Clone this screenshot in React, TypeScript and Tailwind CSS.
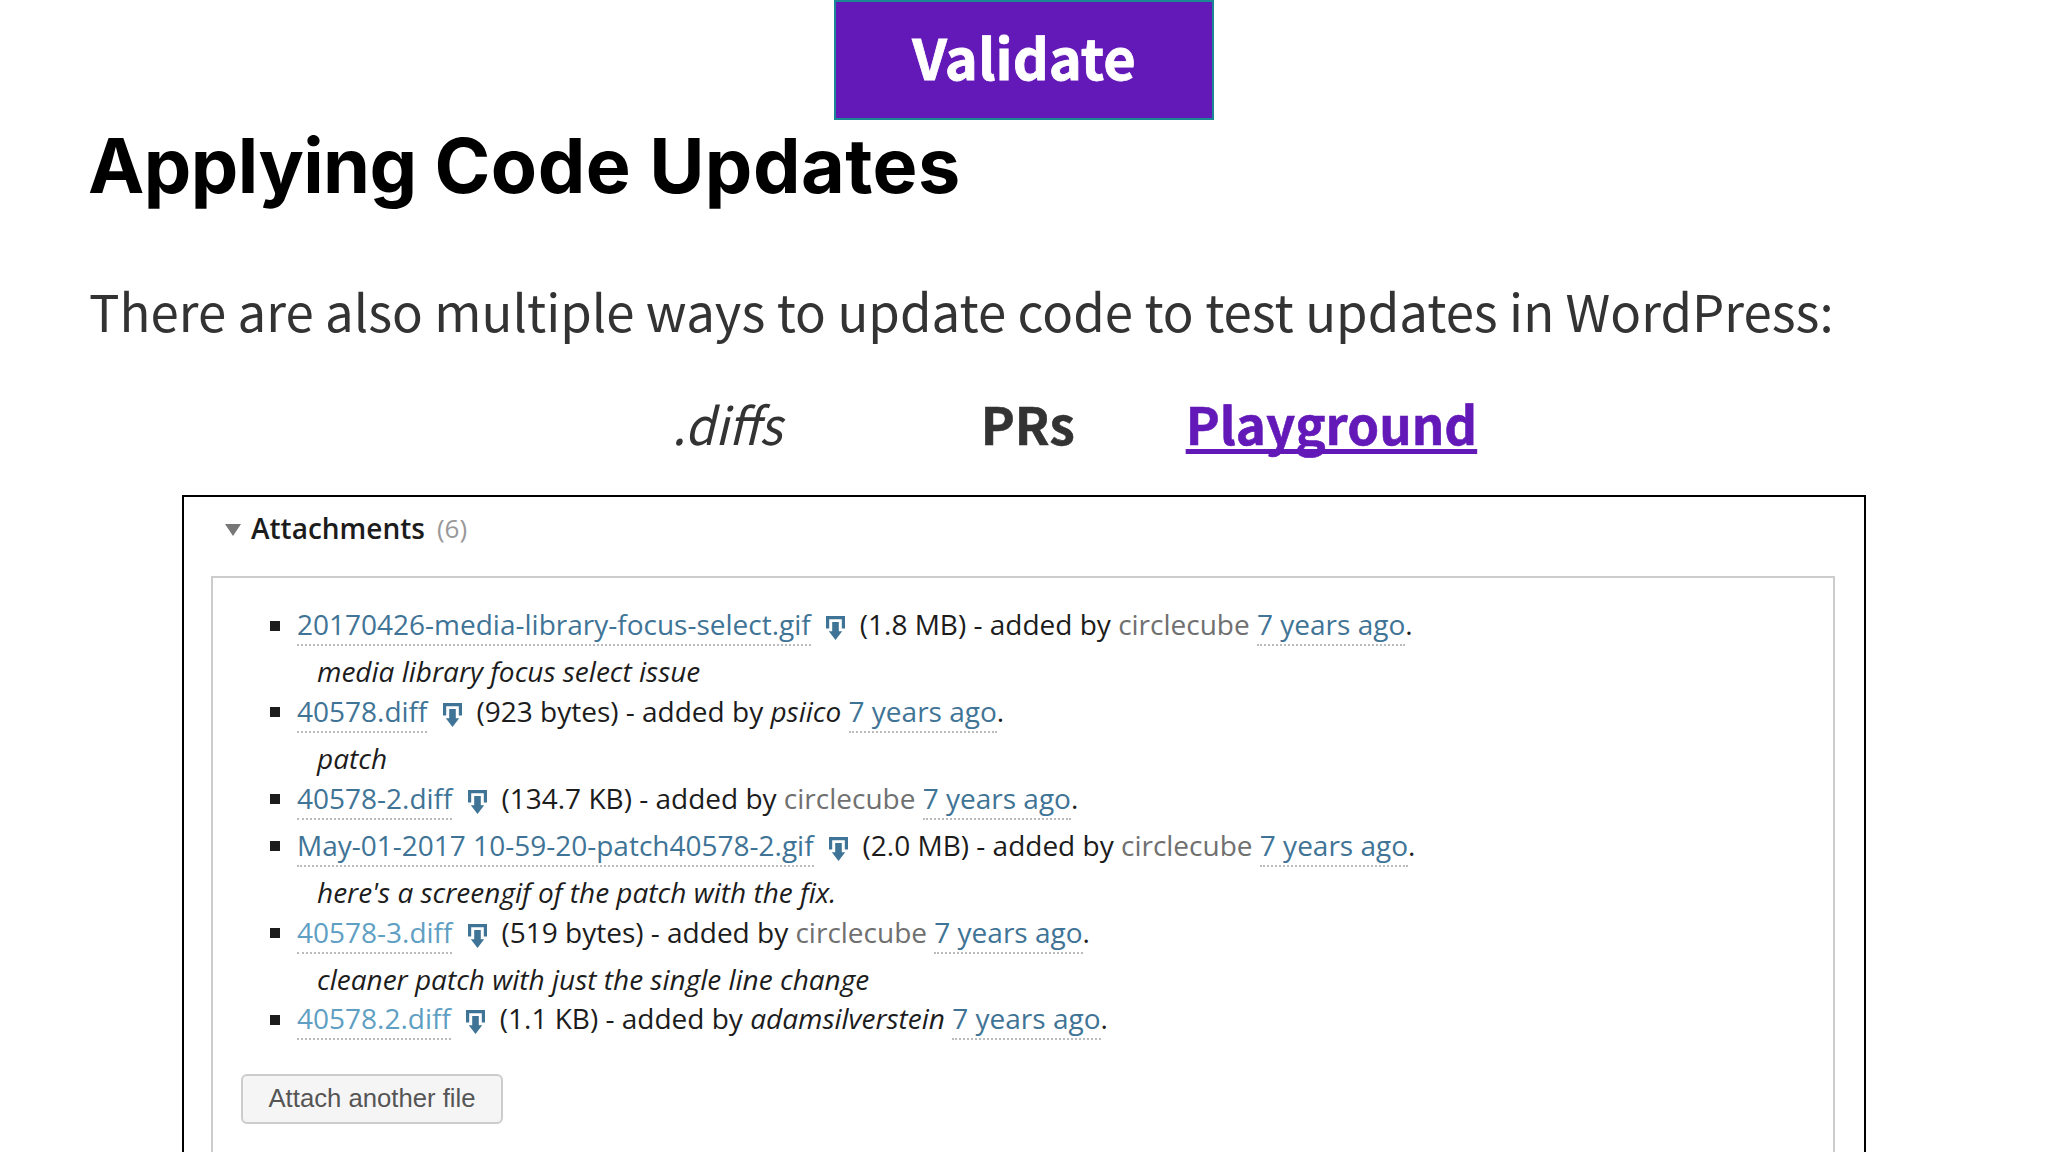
import React from 'react';
import clsx from 'clsx';

interface Attachment {
    id: number;
    name: string;
    size: string;
    author: string;
    registered: boolean;
    description?: string;
    recent?: boolean;
}

const ATTACHMENTS: Attachment[] = [
    { id: 1, name: '20170426-media-library-focus-select.gif', size: '1.8 MB', author: 'circlecube', registered: true, description: 'media library focus select issue' },
    { id: 2, name: '40578.diff', size: '923 bytes', author: 'psiico', registered: false, description: 'patch' },
    { id: 3, name: '40578-2.diff', size: '134.7 KB', author: 'circlecube', registered: true },
    { id: 4, name: 'May-01-2017 10-59-20-patch40578-2.gif', size: '2.0 MB', author: 'circlecube', registered: true, description: "here's a screengif of the patch with the fix." },
    { id: 5, name: '40578-3.diff', size: '519 bytes', author: 'circlecube', registered: true, description: 'cleaner patch with just the single line change', recent: true },
    { id: 6, name: '40578.2.diff', size: '1.1 KB', author: 'adamsilverstein', registered: false, recent: true }
];

function DownloadIcon() {
    return (
        <svg viewBox="0 0 19 24" className="inline-block w-[19px] h-6 ml-[15.5px] mr-[14.5px] align-[-5px]" fill="#3f7496">
            <path d="M0 0H19V12.5H15.8V3.2H3.2V12.5H0Z" />
            <path d="M6.2 6H12.8V15.3H16.2L9.5 24L2.8 15.3H6.2Z" />
        </svg>
    );
}

function AttachmentRow({ item }: { item: Attachment }) {
    return (
        <li>
            <div className="flex items-center h-[47.2px]">
                <span className="w-2.5 h-2.5 mr-[17px] mt-0.5 bg-[#1c1c1c]" />
                <span className="leading-[47.2px] whitespace-nowrap">
                    <a className={clsx('pb-px border-b-2 border-dotted border-[#bbb]', item.recent ? 'text-[#5f9fc3]' : 'text-[#3f7496]')}>{item.name}</a>
                    <DownloadIcon />
                    ({item.size}) - added by{' '}
                    <span className={item.registered ? 'text-[#707070]' : 'italic'}>{item.author}</span>{' '}
                    <a className="pb-px border-b-2 border-dotted border-[#bbb] text-[#3f7496]">7 years ago</a>.
                </span>
            </div>
            {item.description && (
                <p className="ml-[47px] -mb-2 leading-[47.6px] italic">{item.description}</p>
            )}
        </li>
    );
}

export default function App() {
    return (
        <div className="w-[2048px] h-[1152px] overflow-hidden bg-white text-[#333] font-['Noto_Sans_CJK_JP',sans-serif]">
            <div className="flex items-center justify-center w-[380px] h-[120px] mx-auto pb-[9px] bg-[#6318b8] border-2 border-[#1b8792] text-[56px] font-bold text-white [-webkit-text-stroke:0.8px_white]">
                Validate
            </div>

            <h1 className="pl-[88px] pt-px text-[75.5px] leading-[90px] font-bold text-black font-['Inter',sans-serif]">
                <span className="tracking-[-0.6px]">Applying</span>{' '}
                <span className="tracking-[0.5px]">Code</span>{' '}
                <span className="tracking-[0.45px]">Updates</span>
            </h1>
            <p className="pl-[89px] mt-[62px] text-[50.96px] leading-[74px] whitespace-nowrap">
                There are also multiple ways to update code to test updates in WordPress:
            </p>

            <div className="flex pl-[672px] mt-[39px] text-[51px] leading-[74px]">
                <span className="italic origin-left scale-x-[0.95]">.diffs</span>
                <span className="ml-[193px] font-bold [-webkit-text-stroke:0.6px_#333]">PRs</span>
                <a className="ml-[111px] font-bold text-[#6318b8] underline decoration-[5px] underline-offset-[4px] [text-decoration-skip-ink:none] [-webkit-text-stroke:0.6px_#6318b8]">Playground</a>
            </div>

            <div className="w-[1684px] h-[800px] ml-[182px] mt-[35px] px-[27px] border-2 border-black text-[28px] text-[#1c1c1c] font-['Open_Sans',sans-serif]">
                <div className="flex items-center h-[79px] pl-[14px] pb-[18px]">
                    <svg viewBox="0 0 16 12" className="w-4 h-3 mt-1" fill="#777">
                        <path d="M0 0H16L8 12Z" />
                    </svg>
                    <h2 className="ml-2.5 font-semibold">Attachments</h2>
                    <span className="ml-3 mt-0.5 text-[26px] text-[#999]">(6)</span>
                </div>

                <div className="h-[700px] mr-[2px] pl-7 pt-[23px] border-2 border-[#ccc]">
                    <ul className="pl-[29px]">
                        {ATTACHMENTS.map(item => (
                            <AttachmentRow key={item.id} item={item} />
                        ))}
                    </ul>
                    <button className="w-[262px] h-[50px] mt-[31px] rounded-md border-2 border-[#ccc] bg-[#f5f5f5] text-[25.7px] leading-none text-[#555] font-['Liberation_Sans',sans-serif]">
                        Attach another file
                    </button>
                </div>
            </div>
        </div>
    );
}
